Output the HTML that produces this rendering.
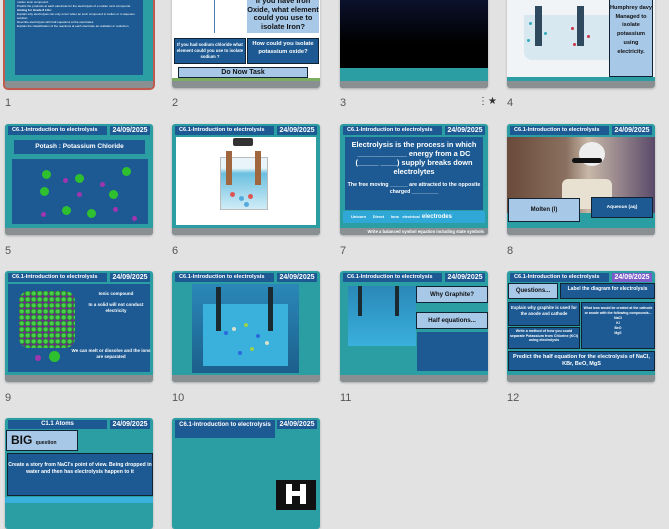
<!DOCTYPE html>
<html><head><meta charset="utf-8"><style>
*{margin:0;padding:0;box-sizing:border-box}
body{width:669px;height:501px;background:#e2e2e2;position:relative;overflow:hidden;font-family:"Liberation Sans",sans-serif}
.s{position:absolute;width:148px;height:111px;background:#2b9ea4;border-radius:3px;overflow:hidden;box-shadow:0 1px 2px rgba(0,0,0,.25)}
.s .ft{position:absolute;left:0;right:0;bottom:0;height:7px;background:#8a8f92}
.h1{position:absolute;left:3px;top:2px;width:99px;height:9px;background:#1d5a93;color:#fff;font-size:5.6px;font-weight:bold;line-height:9px;padding-left:4px;white-space:nowrap}
.h2{position:absolute;left:105px;top:2px;width:40px;height:9px;background:#1d5a93;color:#fff;font-size:7px;font-weight:bold;line-height:9px;text-align:center}
.b{position:absolute;background:#1d5a93;color:#fff;font-weight:bold;text-align:center;overflow:hidden}
.lb{position:absolute;background:#a8c8e8;color:#111;font-weight:bold;text-align:center;border:1px solid #123;overflow:hidden}
.n{position:absolute;font-size:11px;color:#555}
.c{position:absolute;border-radius:50%}
</style></head><body>

<!-- Row 1 -->
<div class="s" style="left:5px;top:-23px;outline:2px solid #c05a4c;outline-offset:0">
 <div class="b" style="left:10px;top:5px;width:128px;height:93px;text-align:left;font-size:3px;font-weight:normal;padding:2px 2px;line-height:4px">
 Write a word equation to describe the electrolysis of a molten ionic compound.<br><b>Aiming for Grade 6 LOs:</b><br>Describe electrolysis in terms of movement of ions.<br>Write a balanced symbol equation including state symbols for the overall electrolysis of a molten ionic compound.<br>Predict the products at each electrode for the electrolysis of a molten ionic compound.<br><b>Aiming for Grade 8 LOs:</b><br>Explain why electrolysis can only occur when an ionic compound is molten or in aqueous solution.<br>Describe electrolysis with half equations at the electrodes.<br>Explain the classification of the reactions at each electrode as oxidation or reduction.</div>
 <div class="ft"></div></div>

<div class="s" style="left:172px;top:-23px;background:#fff">
 <div style="position:absolute;left:42px;top:20px;width:1px;height:36px;background:#4a7ab0"></div>
 <div class="lb" style="left:75px;top:18px;width:72px;height:38px;font-size:7.4px;line-height:8.5px;padding-top:2px;border:none">If you have Iron Oxide, what element could you use to isolate Iron?</div>
 <div class="b" style="left:2px;top:61px;width:72px;height:26px;font-size:4.3px;line-height:6px;padding-top:3px;border:1px solid #123">If you had sodium chloride what element could you use to isolate sodium ?</div>
 <div class="b" style="left:75px;top:61px;width:72px;height:26px;font-size:5.8px;line-height:7.5px;padding-top:2px;border:1px solid #123">How could you isolate potassium oxide?</div>
 <div class="lb" style="left:6px;top:90px;width:130px;height:11px;font-size:7px;line-height:10px">Do Now Task</div>
 <div class="ft"></div><div style="position:absolute;left:0;right:0;bottom:7px;height:3px;background:#7cae62"></div></div>

<div class="s" style="left:340px;top:-23px;background:linear-gradient(#111b44,#000 60%)">
 <div style="position:absolute;left:0;right:0;bottom:7px;height:13px;background:#2b9ea4"></div><div class="ft"></div></div>

<div class="s" style="left:507px;top:-23px;background:#f1f4f6">
 <div style="position:absolute;left:17px;top:38px;width:92px;height:45px;background:#d7e8f0;border-radius:0 0 8px 8px"></div>
 <div style="position:absolute;left:28px;top:29px;width:7px;height:40px;background:#2f4a5e"></div>
 <div style="position:absolute;left:70px;top:29px;width:7px;height:40px;background:#2f4a5e"></div>
 <div class="c" style="left:22px;top:45px;width:3px;height:3px;background:#3ab"></div>
 <div class="c" style="left:37px;top:55px;width:3px;height:3px;background:#3ab"></div>
 <div class="c" style="left:20px;top:62px;width:3px;height:3px;background:#3ab"></div>
 <div class="c" style="left:64px;top:50px;width:3px;height:3px;background:#c34"></div>
 <div class="c" style="left:80px;top:58px;width:3px;height:3px;background:#c34"></div>
 <div class="c" style="left:66px;top:66px;width:3px;height:3px;background:#c34"></div>
 <div class="lb" style="left:102px;top:21px;width:44px;height:79px;font-size:5.6px;line-height:8.7px;padding-top:5px;border:1px solid #123">Humphrey davy Managed to isolate potassium using electricity.</div>
 <div style="position:absolute;left:0;right:0;bottom:7px;height:4px;background:#2b9ea4"></div><div class="ft"></div></div>

<div class="n" style="left:5px;top:97px">1</div>
<div class="n" style="left:172px;top:97px">2</div>
<div class="n" style="left:340px;top:97px">3</div>
<div class="n" style="left:478px;top:96px;font-size:10px;color:#333">⋮★</div>
<div class="n" style="left:507px;top:97px">4</div>

<!-- Row 2 -->
<div class="s" style="left:5px;top:124px">
 <div class="h1">C6.1-Introduction to electrolysis</div><div class="h2">24/09/2025</div>
 <div class="b" style="left:9px;top:16px;width:131px;height:14px;font-size:6.5px;line-height:14px">Potash : Potassium Chloride</div>
 <div class="b" style="left:7px;top:35px;width:136px;height:65px"></div>
 <div class="c" style="left:37px;top:46px;width:9px;height:9px;background:#2fc030"></div>
 <div class="c" style="left:70px;top:50px;width:9px;height:9px;background:#2fc030"></div>
 <div class="c" style="left:117px;top:43px;width:9px;height:9px;background:#2fc030"></div>
 <div class="c" style="left:35px;top:63px;width:9px;height:9px;background:#2fc030"></div>
 <div class="c" style="left:104px;top:66px;width:9px;height:9px;background:#2fc030"></div>
 <div class="c" style="left:57px;top:82px;width:9px;height:9px;background:#2fc030"></div>
 <div class="c" style="left:82px;top:85px;width:9px;height:9px;background:#2fc030"></div>
 <div class="c" style="left:58px;top:54px;width:5px;height:5px;background:#a035b0"></div>
 <div class="c" style="left:95px;top:58px;width:5px;height:5px;background:#a035b0"></div>
 <div class="c" style="left:72px;top:68px;width:5px;height:5px;background:#a035b0"></div>
 <div class="c" style="left:36px;top:88px;width:5px;height:5px;background:#a035b0"></div>
 <div class="c" style="left:108px;top:83px;width:5px;height:5px;background:#a035b0"></div>
 <div class="c" style="left:127px;top:92px;width:5px;height:5px;background:#a035b0"></div>
 <div class="ft"></div></div>

<div class="s" style="left:172px;top:124px">
 <div class="h1">C6.1-Introduction to electrolysis</div><div class="h2">24/09/2025</div>
 <div style="position:absolute;left:4px;top:13px;width:140px;height:88px;background:#fff"></div>
 <div style="position:absolute;left:61px;top:14px;width:20px;height:8px;background:#333;border-radius:2px"></div>
 <div style="position:absolute;left:48px;top:33px;width:48px;height:53px;background:linear-gradient(#e8f4fa 20%,#6bbfe0 30%,#d0ecf6);border:1px solid #bbb"></div>
 <div style="position:absolute;left:54px;top:27px;width:6px;height:34px;background:#a0673f"></div>
 <div style="position:absolute;left:83px;top:27px;width:6px;height:34px;background:#a0673f"></div>
 <div class="c" style="left:58px;top:68px;width:5px;height:5px;background:#d55"></div>
 <div class="c" style="left:67px;top:72px;width:5px;height:5px;background:#5ad"></div>
 <div class="c" style="left:76px;top:70px;width:5px;height:5px;background:#d55"></div>
 <div class="c" style="left:72px;top:78px;width:5px;height:5px;background:#5ad"></div>
 <div class="ft"></div></div>

<div class="s" style="left:340px;top:124px">
 <div class="h1">C6.1-Introduction to electrolysis</div><div class="h2">24/09/2025</div>
 <div class="b" style="left:5px;top:13px;width:138px;height:73px;font-size:7.4px;line-height:9px;padding-top:3px">Electrolysis is the process in which ____________ energy from a DC (_____ ____) supply breaks down electrolytes<div style="font-size:5.3px;line-height:7px;margin-top:6px">The free moving ______ are attracted to the opposite charged _________</div></div>
 <div style="position:absolute;left:3px;top:87px;width:142px;height:12px;background:#2fa8d8;color:#fff;font-size:4px;font-weight:bold;line-height:12px;padding-left:8px;white-space:nowrap">Unicorn &nbsp;&nbsp;&nbsp;&nbsp; Direct &nbsp;&nbsp;&nbsp;&nbsp; Ions &nbsp; electrical &nbsp;<span style="font-size:6px">electrodes</span></div>
 <div class="ft" style="color:#fff;font-size:4.2px;font-weight:bold;line-height:7px;text-align:right;padding-right:4px">Write a balanced symbol equation including state symbols</div></div>

<div class="s" style="left:507px;top:124px">
 <div class="h1">C6.1-Introduction to electrolysis</div><div class="h2">24/09/2025</div>
 <div style="position:absolute;left:0;top:13px;width:148px;height:76px;background:linear-gradient(90deg,#6a4a3a,#8a7060 40%,#c8b8a8 55%,#5a4a6a)"></div>
 <div class="c" style="left:72px;top:18px;width:26px;height:24px;background:#eee"></div>
 <div style="position:absolute;left:65px;top:34px;width:30px;height:5px;background:#111;border-radius:3px"></div>
 <div style="position:absolute;left:55px;top:55px;width:50px;height:30px;background:#e8e0d0;border-radius:6px 6px 0 0"></div>
 <div class="lb" style="left:1px;top:74px;width:72px;height:24px;font-size:6px;line-height:22px">Molten (l)</div>
 <div class="b" style="left:84px;top:73px;width:62px;height:21px;font-size:4.8px;line-height:20px;border:1px solid #123">Aqueous (aq)</div>
 <div class="ft"></div></div>

<div class="n" style="left:5px;top:245px">5</div>
<div class="n" style="left:172px;top:245px">6</div>
<div class="n" style="left:340px;top:245px">7</div>
<div class="n" style="left:507px;top:245px">8</div>

<!-- Row 3 -->
<div class="s" style="left:5px;top:271px">
 <div class="h1">C6.1-Introduction to electrolysis</div><div class="h2">24/09/2025</div>
 <div class="b" style="left:3px;top:13px;width:142px;height:88px"></div>
 <div style="position:absolute;left:14px;top:20px;width:56px;height:57px;border-radius:10px;background:radial-gradient(circle at 45% 40%,#4ad04a 0 1.5px,#1f8a2a 2.6px,#6a2f8a 3.2px) 0 0/6px 6px;"></div>
 <div style="position:absolute;left:78px;top:20px;width:66px;font-size:4.5px;font-weight:bold;color:#fff;text-align:center;line-height:5.6px">Ionic compound<br><br>In a solid will not conduct electricity</div>
 <div style="position:absolute;left:66px;top:77px;width:80px;font-size:4.5px;font-weight:bold;color:#fff;text-align:center;line-height:5.6px">We can melt or dissolve and the ions are separated</div>
 <div class="c" style="left:30px;top:84px;width:6px;height:6px;background:#a035b0"></div>
 <div class="c" style="left:44px;top:80px;width:11px;height:11px;background:#2fc030"></div>
 <div class="ft"></div></div>

<div class="s" style="left:172px;top:271px">
 <div class="h1">C6.1-Introduction to electrolysis</div><div class="h2">24/09/2025</div>
 <div style="position:absolute;left:20px;top:13px;width:107px;height:89px;background:linear-gradient(#2a88b8,#1c5f8c)"></div>
 <div style="position:absolute;left:31px;top:33px;width:85px;height:62px;background:#3ab0dc"></div>
 <div style="position:absolute;left:44px;top:16px;width:5px;height:44px;background:#1a2a30"></div>
 <div style="position:absolute;left:96px;top:16px;width:5px;height:44px;background:#1a2a30"></div>
 <div class="c" style="left:52px;top:60px;width:4px;height:4px;background:#2a6adf"></div>
 <div class="c" style="left:60px;top:56px;width:4px;height:4px;background:#d8e0c8"></div>
 <div class="c" style="left:72px;top:52px;width:4px;height:4px;background:#9bd04a"></div>
 <div class="c" style="left:84px;top:63px;width:4px;height:4px;background:#2a6adf"></div>
 <div class="c" style="left:78px;top:76px;width:4px;height:4px;background:#9bd04a"></div>
 <div class="c" style="left:66px;top:80px;width:4px;height:4px;background:#2a6adf"></div>
 <div class="c" style="left:93px;top:70px;width:4px;height:4px;background:#d8e0c8"></div>
 <div class="ft"></div></div>

<div class="s" style="left:340px;top:271px">
 <div class="h1">C6.1-Introduction to electrolysis</div><div class="h2">24/09/2025</div>
 <div style="position:absolute;left:8px;top:15px;width:68px;height:60px;background:linear-gradient(#2a88b8,#3ab0dc)"></div>
 <div style="position:absolute;left:18px;top:15px;width:4px;height:30px;background:#1a2a30"></div>
 <div style="position:absolute;left:55px;top:15px;width:4px;height:30px;background:#1a2a30"></div>
 <div class="lb" style="left:76px;top:15px;width:72px;height:17px;font-size:6.2px;line-height:16px">Why Graphite?</div>
 <div class="lb" style="left:76px;top:41px;width:72px;height:17px;font-size:6.2px;line-height:16px">Half equations...</div>
 <div class="b" style="left:77px;top:61px;width:71px;height:39px"></div>
 <div class="ft"></div></div>

<div class="s" style="left:507px;top:271px">
 <div class="h1">C6.1-Introduction to electrolysis</div><div class="h2" style="background:#7b5cc8">24/09/2025</div>
 <div class="lb" style="left:1px;top:12px;width:50px;height:16px;font-size:6px;line-height:15px">Questions...</div>
 <div class="b" style="left:53px;top:12px;width:95px;height:16px;font-size:5px;line-height:6px;padding-top:2px;border:1px solid #123">Label the diagram for electrolysis</div>
 <div class="b" style="left:1px;top:31px;width:72px;height:24px;font-size:4.3px;line-height:5.6px;padding-top:2px;border:1px solid #123">Explain why graphite is used for the anode and cathode</div>
 <div class="b" style="left:1px;top:56px;width:72px;height:22px;font-size:3.6px;line-height:4.7px;padding-top:1px;border:1px solid #123">Write a method of how you could separate Potassium from Chlorine (KCl) using electrolysis</div>
 <div class="b" style="left:74px;top:31px;width:74px;height:47px;font-size:3.4px;line-height:5px;padding-top:3px;border:1px solid #123">What ions would be created at the cathode or anode with the following compounds...<br>NaCl<br>KI<br>BeO<br>MgS</div>
 <div class="b" style="left:1px;top:80px;width:147px;height:20px;font-size:5.5px;line-height:7px;padding-top:2px;border:1px solid #123">Predict the half equation for the electrolysis of NaCl, KBr, BeO, MgS</div>
 <div class="ft"></div></div>

<div class="n" style="left:5px;top:392px">9</div>
<div class="n" style="left:172px;top:392px">10</div>
<div class="n" style="left:340px;top:392px">11</div>
<div class="n" style="left:507px;top:392px">12</div>

<!-- Row 4 -->
<div class="s" style="left:5px;top:418px">
 <div class="h1" style="text-align:center;font-size:6px;padding:0">C1.1 Atoms</div><div class="h2">24/09/2025</div>
 <div class="lb" style="left:1px;top:12px;width:72px;height:21px;font-size:12px;line-height:19px;text-align:left;padding-left:4px">BIG <span style="font-size:5px">question</span></div>
 <div class="b" style="left:2px;top:35px;width:146px;height:43px;font-size:5.2px;line-height:7px;padding-top:8px;border:1px solid #123">Create a story from NaCl's point of view. Being dropped in water and then has electrolysis happen to it</div>
 <div style="position:absolute;left:0;top:79px;width:148px;height:6px;background:#3ab0dc"></div>
</div>

<div class="s" style="left:172px;top:418px">
 <div class="h1" style="width:100px;height:18px;font-size:6px;line-height:7px;text-align:center;padding:2px 0 0">C6.1-Introduction to electrolysis</div><div class="h2">24/09/2025</div>
 <div style="position:absolute;left:104px;top:62px;width:40px;height:30px;background:#111"></div>
 <div style="position:absolute;left:114px;top:66px;width:6px;height:20px;background:#fff"></div>
 <div style="position:absolute;left:128px;top:66px;width:6px;height:20px;background:#fff"></div>
 <div style="position:absolute;left:114px;top:73px;width:20px;height:5px;background:#fff"></div>
</div>

</body></html>
